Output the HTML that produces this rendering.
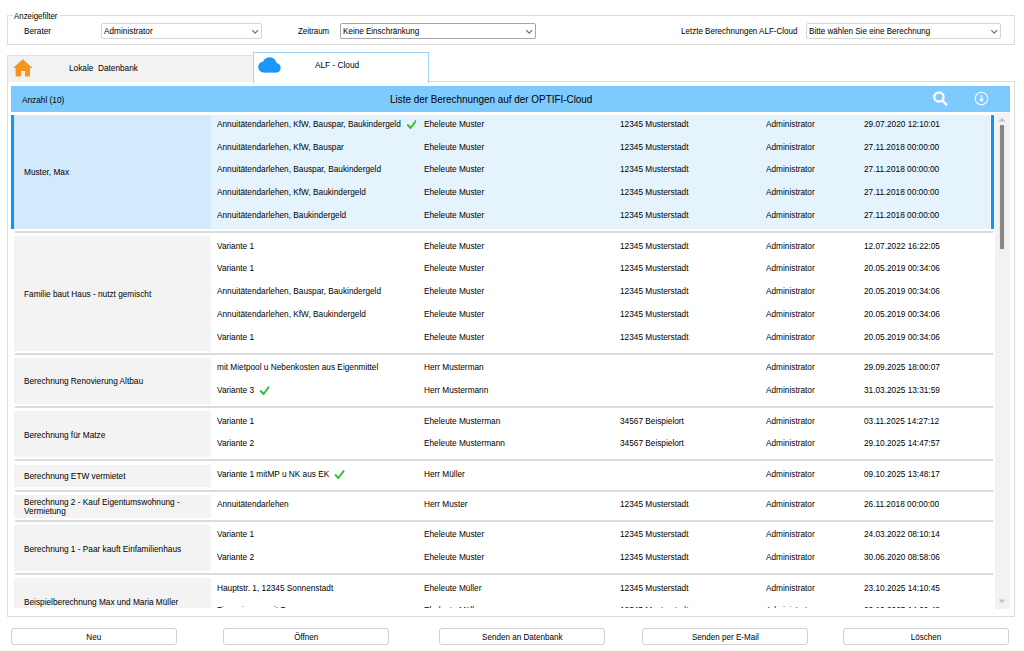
<!DOCTYPE html>
<html><head><meta charset="utf-8">
<style>
*{box-sizing:border-box;margin:0;padding:0}
html,body{width:1024px;height:651px;overflow:hidden;background:#fff}
body{position:relative;font-family:"Liberation Sans",sans-serif;font-size:9.5px;color:#000;letter-spacing:0px}
.a{position:absolute;white-space:nowrap}
.gb{position:absolute;left:7px;top:15px;width:1008px;height:30px;border:1px solid #dcdcdc}
.gbl{position:absolute;left:5px;top:-6.5px;background:#fff;padding:0 1px;line-height:12px;width:47px}
.gbl .s{transform:scaleX(.83)}
.cb{position:absolute;height:16px;border:1px solid #d6d6d6;border-radius:2px;background:#fff;line-height:14px;padding-left:2px}
.cb.dk{border-color:#a6a6a6}
.cb svg{position:absolute;right:2px;top:4.5px}
.tab0{position:absolute;left:7px;top:55px;width:247px;height:27px;background:#f2f2f2;border:1px solid #e0e0e0;border-bottom:none}
.tab1{position:absolute;left:253px;top:52px;width:176px;height:31px;background:#fff;border:1px solid #9fd0f5;border-bottom:none}
.panel{position:absolute;left:7px;top:81px;width:1008px;height:536px;border:1px solid #dcdcdc;border-top:none}
.ptop{position:absolute;left:429px;top:81px;width:586px;height:1px;background:#dcdcdc}
.hdr{position:absolute;left:11px;top:85.8px;width:999px;height:26.6px;background:#7fcafc}
.list{position:absolute;left:11px;top:114px;width:984px;height:494px;overflow:hidden}
.grp{position:absolute;left:0;width:984px}
.lbar{position:absolute;left:0;top:0;width:3px;bottom:0;background:#0f94ff}
.rbg{position:absolute;left:200px;top:0;width:779px;bottom:0;background:#e5f3fd}
.rbar{position:absolute;left:980px;top:0;width:3px;bottom:0;background:#0f94ff}
.ncell{position:absolute;left:3px;top:0;width:197px;height:100%;background:#f3f3f3;display:flex;align-items:center}
.sel .ncell{background:#d3e9fc}
.ntxt{margin-left:10px;line-height:9px;white-space:nowrap;transform:scaleX(0.87);transform-origin:0 50%}
.s{display:inline-block;transform:scaleX(0.87);transform-origin:0 0}
.sc{display:inline-block;transform:scaleX(0.87);transform-origin:50% 0}
.t{position:absolute;height:23px;line-height:19px;white-space:nowrap;transform:scaleX(0.87);transform-origin:0 0}
.sep{position:absolute;left:3.5px;width:978px;height:2px;background:#dbdbdb}
.ck{vertical-align:-2px;margin-left:6.3px}
.sb{position:absolute;left:995px;top:113px;width:15px;height:496px;background:#f2f2f2}
.btn{position:absolute;top:628px;height:16.5px;width:166px;border:1px solid #d0d0d0;border-radius:3px;background:#fff;text-align:center;line-height:14px;padding-top:1px}
.btn .sc{transform:scaleX(.85)}
</style></head><body>
<div class="gb"><div class="gbl"><span class="s">Anzeigefilter</span></div></div>
<div class="a" style="left:24px;top:24.5px;line-height:12px"><span class="s">Berater</span></div>
<div class="cb" style="left:101px;top:23px;width:161px"><span class="s">Administrator</span><svg width="8" height="6" viewBox="0 0 8 6"><path d="M1.3 1.2 L4.2 4.2 L7.1 1.2" fill="none" stroke="#6e6e6e" stroke-width="1.2"/></svg></div>
<div class="a" style="left:298px;top:24.5px;line-height:12px"><span class="s" style="transform:scaleX(.83)">Zeitraum</span></div>
<div class="cb dk" style="left:340px;top:23px;width:196px"><span class="s" style="transform:scaleX(.85)">Keine Einschränkung</span><svg width="8" height="6" viewBox="0 0 8 6"><path d="M1.3 1.2 L4.2 4.2 L7.1 1.2" fill="none" stroke="#6e6e6e" stroke-width="1.2"/></svg></div>
<div class="a" style="left:681px;top:25px;line-height:12px"><span class="s" style="transform:scaleX(.845)">Letzte Berechnungen ALF-Cloud</span></div>
<div class="cb" style="left:806px;top:23px;width:195px;padding-right:0"><span class="s" style="transform:scaleX(.85)">Bitte wählen Sie eine Berechnung</span><svg width="8" height="6" viewBox="0 0 8 6"><path d="M1.3 1.2 L4.2 4.2 L7.1 1.2" fill="none" stroke="#6e6e6e" stroke-width="1.2"/></svg></div>

<div class="tab0"></div>
<div class="panel"></div><div class="ptop"></div>
<div class="tab1"></div>
<svg class="a" style="left:13px;top:59px" width="20" height="18" viewBox="0 0 20 18"><path d="M9.8 0.2 L19.5 9 L17 9 L17 17.5 L12 17.5 L12 12 L8 12 L8 17.5 L2.6 17.5 L2.6 9 L0 9 Z" fill="#f7941d"/></svg>
<div class="a" style="left:69px;top:62px;line-height:12px"><span class="s">Lokale&nbsp; Datenbank</span></div>
<svg class="a" style="left:257px;top:56px" width="25" height="18" viewBox="0 0 25 18"><g fill="#1a97fc"><circle cx="6.8" cy="11" r="5.6"/><circle cx="12.6" cy="8.2" r="7"/><circle cx="18.9" cy="11.8" r="4.8"/><rect x="6.8" y="10" width="12.1" height="6.6"/></g></svg>
<div class="a" style="left:315px;top:59px;line-height:12px"><span class="s">ALF - Cloud</span></div>

<div class="hdr"></div>
<div class="a" style="left:22px;top:93.5px;line-height:12px"><span class="s">Anzahl (10)</span></div>
<div class="a" style="left:390px;top:93px;line-height:14px;font-size:10.2px;letter-spacing:0;transform:scaleX(.971);transform-origin:0 0">Liste der Berechnungen auf der OPTIFI-Cloud</div>
<svg class="a" style="left:932px;top:90px" width="17" height="17" viewBox="0 0 17 17"><circle cx="6.9" cy="7" r="4.7" fill="none" stroke="#fff" stroke-width="2.2"/><path d="M10.4 10.6 L14.4 14.6" stroke="#fff" stroke-width="2.3" stroke-linecap="round"/></svg>
<svg class="a" style="left:974px;top:91px" width="15" height="15" viewBox="0 0 15 15"><circle cx="7.5" cy="7.5" r="6.3" fill="none" stroke="#fff" stroke-width="1.1"/><path d="M7.5 4 L7.5 9" stroke="#fff" stroke-width="1.4"/><path d="M5 8 L10 8 L7.5 11 Z" fill="#fff"/></svg>

<div class="list">
<div class="grp sel" style="top:0.6px;height:114.25px"><div class="lbar"></div><div class="rbg"></div><div class="rbar"></div><div class="ncell"><div class="ntxt">Muster, Max</div></div><div class="t" style="top:-0.8px;left:206px">Annuitätendarlehen, KfW, Bauspar, Baukindergeld<svg class="ck" width="11.5" height="9" viewBox="0 0 10 9" preserveAspectRatio="none"><path d="M1.1 5 L3.9 8 L9.1 1.1" fill="none" stroke="#3cc03c" stroke-width="2" stroke-linecap="round" stroke-linejoin="round"/></svg></div><div class="t" style="top:-0.8px;left:412.5px">Eheleute Muster</div><div class="t" style="top:-0.8px;left:609px">12345 Musterstadt</div><div class="t" style="top:-0.8px;left:755px">Administrator</div><div class="t" style="top:-0.8px;left:853px">29.07.2020 12:10:01</div><div class="t" style="top:22.05px;left:206px">Annuitätendarlehen, KfW, Bauspar</div><div class="t" style="top:22.05px;left:412.5px">Eheleute Muster</div><div class="t" style="top:22.05px;left:609px">12345 Musterstadt</div><div class="t" style="top:22.05px;left:755px">Administrator</div><div class="t" style="top:22.05px;left:853px">27.11.2018 00:00:00</div><div class="t" style="top:44.9px;left:206px">Annuitätendarlehen, Bauspar, Baukindergeld</div><div class="t" style="top:44.9px;left:412.5px">Eheleute Muster</div><div class="t" style="top:44.9px;left:609px">12345 Musterstadt</div><div class="t" style="top:44.9px;left:755px">Administrator</div><div class="t" style="top:44.9px;left:853px">27.11.2018 00:00:00</div><div class="t" style="top:67.75px;left:206px">Annuitätendarlehen, KfW, Baukindergeld</div><div class="t" style="top:67.75px;left:412.5px">Eheleute Muster</div><div class="t" style="top:67.75px;left:609px">12345 Musterstadt</div><div class="t" style="top:67.75px;left:755px">Administrator</div><div class="t" style="top:67.75px;left:853px">27.11.2018 00:00:00</div><div class="t" style="top:90.6px;left:206px">Annuitätendarlehen, Baukindergeld</div><div class="t" style="top:90.6px;left:412.5px">Eheleute Muster</div><div class="t" style="top:90.6px;left:609px">12345 Musterstadt</div><div class="t" style="top:90.6px;left:755px">Administrator</div><div class="t" style="top:90.6px;left:853px">27.11.2018 00:00:00</div></div><div class="sep" style="top:117.15px"></div><div class="grp" style="top:122.35px;height:114.25px"><div class="ncell"><div class="ntxt">Familie baut Haus - nutzt gemischt</div></div><div class="t" style="top:-0.8px;left:206px">Variante 1</div><div class="t" style="top:-0.8px;left:412.5px">Eheleute Muster</div><div class="t" style="top:-0.8px;left:609px">12345 Musterstadt</div><div class="t" style="top:-0.8px;left:755px">Administrator</div><div class="t" style="top:-0.8px;left:853px">12.07.2022 16:22:05</div><div class="t" style="top:22.05px;left:206px">Variante 1</div><div class="t" style="top:22.05px;left:412.5px">Eheleute Muster</div><div class="t" style="top:22.05px;left:609px">12345 Musterstadt</div><div class="t" style="top:22.05px;left:755px">Administrator</div><div class="t" style="top:22.05px;left:853px">20.05.2019 00:34:06</div><div class="t" style="top:44.9px;left:206px">Annuitätendarlehen, Bauspar, Baukindergeld</div><div class="t" style="top:44.9px;left:412.5px">Eheleute Muster</div><div class="t" style="top:44.9px;left:609px">12345 Musterstadt</div><div class="t" style="top:44.9px;left:755px">Administrator</div><div class="t" style="top:44.9px;left:853px">20.05.2019 00:34:06</div><div class="t" style="top:67.75px;left:206px">Annuitätendarlehen, KfW, Baukindergeld</div><div class="t" style="top:67.75px;left:412.5px">Eheleute Muster</div><div class="t" style="top:67.75px;left:609px">12345 Musterstadt</div><div class="t" style="top:67.75px;left:755px">Administrator</div><div class="t" style="top:67.75px;left:853px">20.05.2019 00:34:06</div><div class="t" style="top:90.6px;left:206px">Variante 1</div><div class="t" style="top:90.6px;left:412.5px">Eheleute Muster</div><div class="t" style="top:90.6px;left:609px">12345 Musterstadt</div><div class="t" style="top:90.6px;left:755px">Administrator</div><div class="t" style="top:90.6px;left:853px">20.05.2019 00:34:06</div></div><div class="sep" style="top:238.9px"></div><div class="grp" style="top:244.1px;height:45.7px"><div class="ncell"><div class="ntxt">Berechnung Renovierung Altbau</div></div><div class="t" style="top:-0.8px;left:206px">mit Mietpool u Nebenkosten aus Eigenmittel</div><div class="t" style="top:-0.8px;left:412.5px">Herr Musterman</div><div class="t" style="top:-0.8px;left:755px">Administrator</div><div class="t" style="top:-0.8px;left:853px">29.09.2025 18:00:07</div><div class="t" style="top:22.05px;left:206px">Variante 3<svg class="ck" width="11.5" height="9" viewBox="0 0 10 9" preserveAspectRatio="none"><path d="M1.1 5 L3.9 8 L9.1 1.1" fill="none" stroke="#3cc03c" stroke-width="2" stroke-linecap="round" stroke-linejoin="round"/></svg></div><div class="t" style="top:22.05px;left:412.5px">Herr Mustermann</div><div class="t" style="top:22.05px;left:755px">Administrator</div><div class="t" style="top:22.05px;left:853px">31.03.2025 13:31:59</div></div><div class="sep" style="top:292.1px"></div><div class="grp" style="top:297.3px;height:45.7px"><div class="ncell"><div class="ntxt">Berechnung für Matze</div></div><div class="t" style="top:-0.8px;left:206px">Variante 1</div><div class="t" style="top:-0.8px;left:412.5px">Eheleute Musterman</div><div class="t" style="top:-0.8px;left:609px">34567 Beispielort</div><div class="t" style="top:-0.8px;left:755px">Administrator</div><div class="t" style="top:-0.8px;left:853px">03.11.2025 14:27:12</div><div class="t" style="top:22.05px;left:206px">Variante 2</div><div class="t" style="top:22.05px;left:412.5px">Eheleute Mustermann</div><div class="t" style="top:22.05px;left:609px">34567 Beispielort</div><div class="t" style="top:22.05px;left:755px">Administrator</div><div class="t" style="top:22.05px;left:853px">29.10.2025 14:47:57</div></div><div class="sep" style="top:345.3px"></div><div class="grp" style="top:350.5px;height:22.85px"><div class="ncell"><div class="ntxt">Berechnung ETW vermietet</div></div><div class="t" style="top:-0.8px;left:206px">Variante 1 mitMP u NK aus EK<svg class="ck" width="11.5" height="9" viewBox="0 0 10 9" preserveAspectRatio="none"><path d="M1.1 5 L3.9 8 L9.1 1.1" fill="none" stroke="#3cc03c" stroke-width="2" stroke-linecap="round" stroke-linejoin="round"/></svg></div><div class="t" style="top:-0.8px;left:412.5px">Herr Müller</div><div class="t" style="top:-0.8px;left:755px">Administrator</div><div class="t" style="top:-0.8px;left:853px">09.10.2025 13:48:17</div></div><div class="sep" style="top:375.65px"></div><div class="grp" style="top:380.85px;height:22.85px"><div class="ncell"><div class="ntxt">Berechnung 2 - Kauf Eigentumswohnung -<br>Vermietung</div></div><div class="t" style="top:-0.8px;left:206px">Annuitätendarlehen</div><div class="t" style="top:-0.8px;left:412.5px">Herr Muster</div><div class="t" style="top:-0.8px;left:609px">12345 Musterstadt</div><div class="t" style="top:-0.8px;left:755px">Administrator</div><div class="t" style="top:-0.8px;left:853px">26.11.2018 00:00:00</div></div><div class="sep" style="top:406.0px"></div><div class="grp" style="top:411.2px;height:45.7px"><div class="ncell"><div class="ntxt">Berechnung 1 - Paar kauft Einfamilienhaus</div></div><div class="t" style="top:-0.8px;left:206px">Variante 1</div><div class="t" style="top:-0.8px;left:412.5px">Eheleute Muster</div><div class="t" style="top:-0.8px;left:609px">12345 Musterstadt</div><div class="t" style="top:-0.8px;left:755px">Administrator</div><div class="t" style="top:-0.8px;left:853px">24.03.2022 08:10:14</div><div class="t" style="top:22.05px;left:206px">Variante 2</div><div class="t" style="top:22.05px;left:412.5px">Eheleute Muster</div><div class="t" style="top:22.05px;left:609px">12345 Musterstadt</div><div class="t" style="top:22.05px;left:755px">Administrator</div><div class="t" style="top:22.05px;left:853px">30.06.2020 08:58:06</div></div><div class="sep" style="top:459.2px"></div><div class="grp" style="top:464.4px;height:45.7px"><div class="ncell"><div class="ntxt">Beispielberechnung Max und Maria Müller</div></div><div class="t" style="top:-0.8px;left:206px">Hauptstr. 1, 12345 Sonnenstadt</div><div class="t" style="top:-0.8px;left:412.5px">Eheleute Müller</div><div class="t" style="top:-0.8px;left:609px">12345 Musterstadt</div><div class="t" style="top:-0.8px;left:755px">Administrator</div><div class="t" style="top:-0.8px;left:853px">23.10.2025 14:10:45</div><div class="t" style="top:22.05px;left:206px">Finanzierung mit Bauspar</div><div class="t" style="top:22.05px;left:412.5px">Eheleute Müller</div><div class="t" style="top:22.05px;left:609px">12345 Musterstadt</div><div class="t" style="top:22.05px;left:755px">Administrator</div><div class="t" style="top:22.05px;left:853px">20.10.2025 14:09:48</div></div><div class="sep" style="top:512.4px"></div>
</div>
<div class="sb">
<svg class="a" style="left:3px;top:4px" width="8" height="5" viewBox="0 0 8 5"><path d="M0.5 4.5 L4 0.8 L7.5 4.5 Z" fill="#c2c2c2"/></svg>
<div class="a" style="left:4.7px;top:12.3px;width:4.8px;height:123.7px;background:#868686;border-radius:1px;box-shadow:0 0 1px #aaa"></div>
<svg class="a" style="left:3px;top:486px" width="8" height="5" viewBox="0 0 8 5"><path d="M0.5 0.5 L4 4.2 L7.5 0.5 Z" fill="#c2c2c2"/></svg>
</div>

<div class="btn" style="left:10.7px"><span class="sc">Neu</span></div>
<div class="btn" style="left:222.7px"><span class="sc">Öffnen</span></div>
<div class="btn" style="left:439.3px"><span class="sc">Senden an Datenbank</span></div>
<div class="btn" style="left:641.9px"><span class="sc">Senden per E-Mail</span></div>
<div class="btn" style="left:843.3px"><span class="sc">Löschen</span></div>
</body></html>
